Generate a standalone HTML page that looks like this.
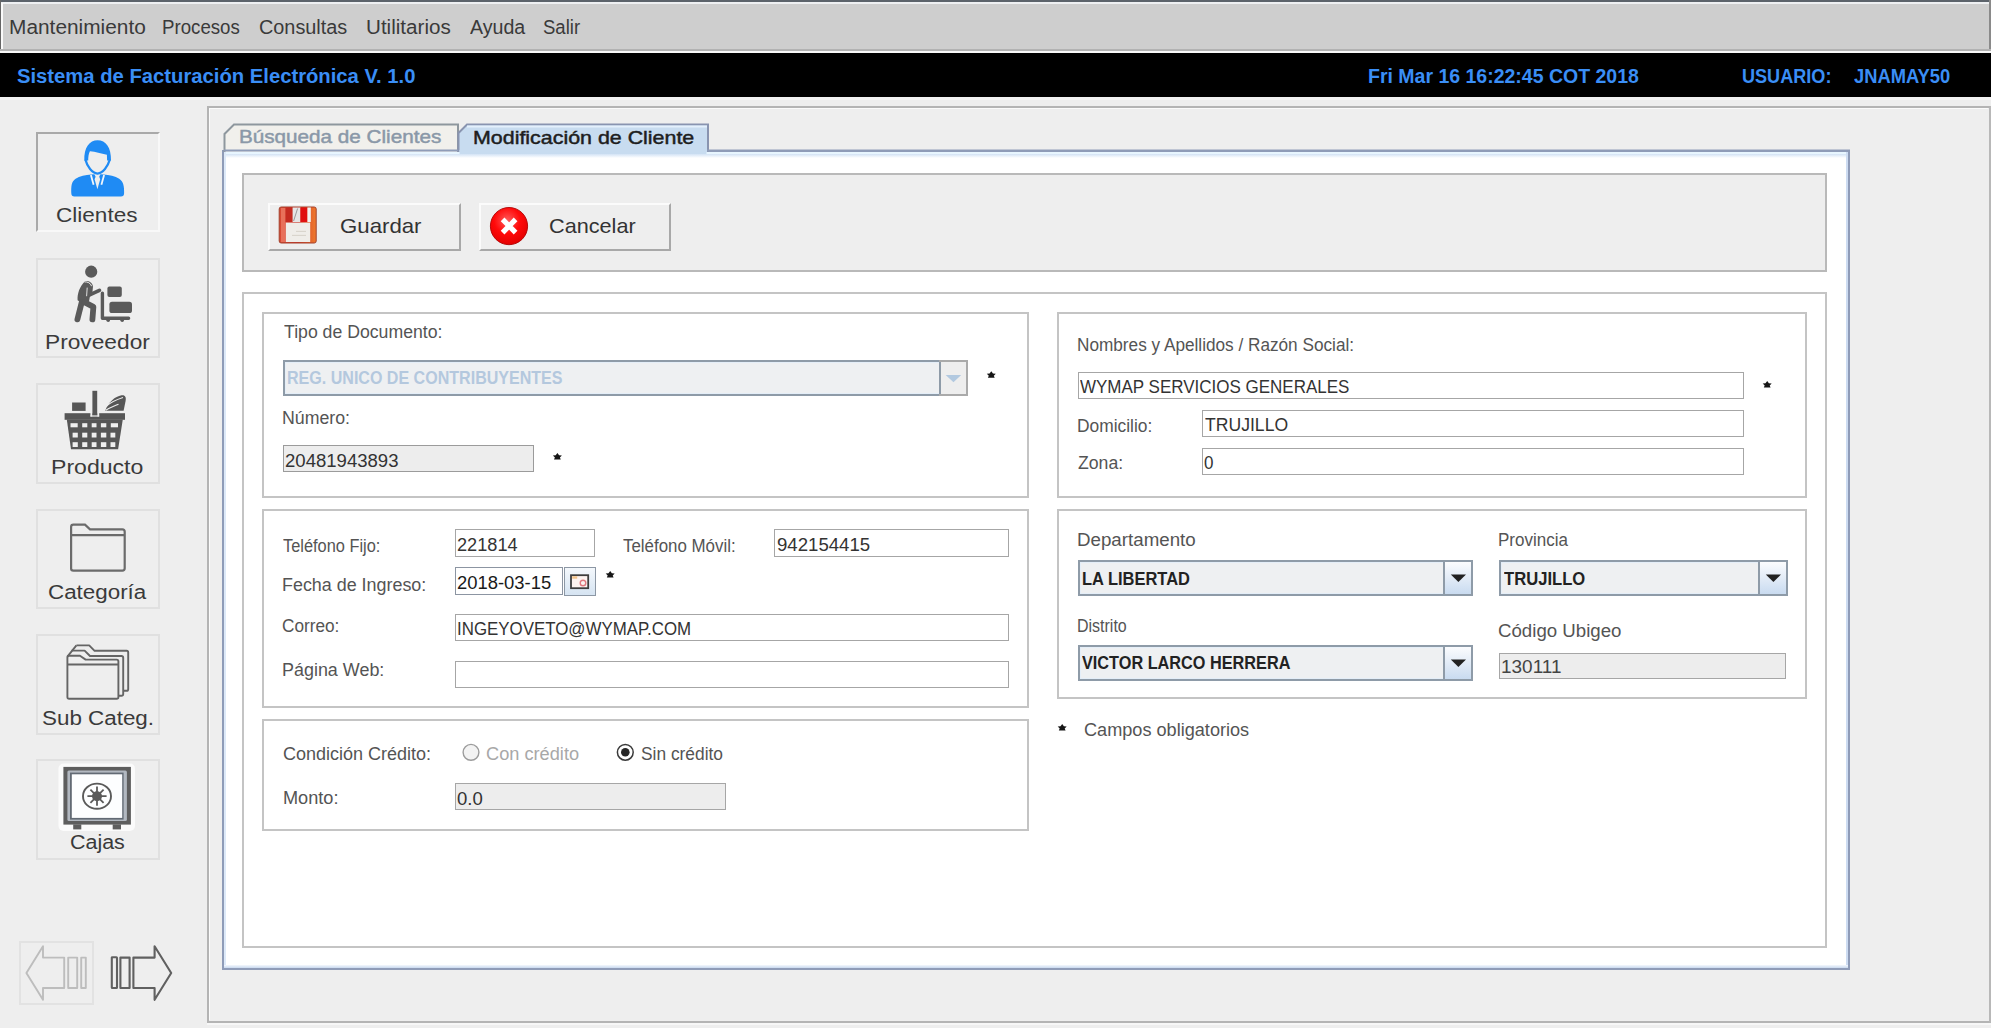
<!DOCTYPE html>
<html><head><meta charset="utf-8">
<style>
*{box-sizing:border-box;margin:0;padding:0}
html,body{width:1991px;height:1028px;overflow:hidden;background:#eeeeee;font-family:"Liberation Sans",sans-serif}
.a{position:absolute}
.tx{position:absolute;white-space:pre;line-height:1;transform-origin:0 0}
.fld{position:absolute;background:#fff;border:1px solid #a6a6a6}
.dis{background:#ededed}
.pan{position:absolute;border:2px solid #c4c4c4;background:#fff}
.cmb{position:absolute;border:2px solid #8e9ba8;background:#eef0f2}
.cmb .in{position:absolute;left:0;top:0;right:0;bottom:0;border:1px solid #e4eef8}
.cbtn{position:absolute;top:-2px;bottom:-2px;border:2px solid #8e9ba8;background:linear-gradient(#fbfcfe,#c9dbf0)}
.sb{position:absolute;left:36px;width:124px;border:2px solid #e0e0e0}
</style></head><body>
<!-- menubar -->
<div class="a" style="left:0;top:0;width:1991px;height:53px;background:#cecece"></div>
<div class="a" style="left:0;top:0;width:1991px;height:2px;background:#5c636b"></div>
<div class="a" style="left:0;top:2px;width:1991px;height:2px;background:#eef0f2"></div>
<div class="a" style="left:0;top:0;width:1px;height:53px;background:#666"></div>
<div class="a" style="left:1px;top:3px;width:2px;height:47px;background:#fafafa"></div>
<div class="a" style="left:1989px;top:0;width:2px;height:53px;background:#8a8a8a"></div>
<div class="a" style="left:0;top:49px;width:1991px;height:2px;background:#b2b2b2"></div>
<div class="a" style="left:0;top:51px;width:1991px;height:2px;background:#f7f7f7"></div>
<!-- title bar -->
<div class="a" style="left:0;top:53px;width:1991px;height:44px;background:#000"></div>
<div class="a" style="left:0;top:97px;width:1991px;height:3px;background:#f3f3f3"></div>

<!-- side buttons -->
<div class="sb" style="top:132px;height:100px;border-color:#a9a9a9 #f8f8f8 #f8f8f8 #a9a9a9"></div>
<div class="sb" style="top:258px;height:100px"></div>
<div class="sb" style="top:383px;height:101px"></div>
<div class="sb" style="top:509px;height:100px"></div>
<div class="sb" style="top:634px;height:101px"></div>
<div class="sb" style="top:759px;height:101px"></div>
<div class="a" style="left:19px;top:941px;width:75px;height:64px;border:2px solid #e2e2e2"></div>

<!-- main outer panel -->
<div class="a" style="left:207px;top:106px;width:1784px;height:917px;border:2px solid #b4b4b4;border-right-color:#b8b8b8"></div>
<div class="a" style="left:209px;top:108px;width:1779px;height:1px;background:#fbfbfb"></div>
<div class="a" style="left:209px;top:109px;width:1px;height:911px;background:#fbfbfb"></div>
<div class="a" style="left:207px;top:1023px;width:1784px;height:2px;background:#f7f7f7"></div>

<!-- content panel -->
<div class="a" style="left:222px;top:150px;width:1628px;height:820px;background:#fff;border:2px solid #8f9cb8"></div>
<div class="a" style="left:224px;top:152px;width:1624px;height:2px;background:#e8f6ff"></div>
<div class="a" style="left:224px;top:154px;width:1624px;height:4px;background:linear-gradient(#d3e3f5,#fff)"></div>
<div class="a" style="left:224px;top:152px;width:2px;height:816px;background:#dde9f8"></div>
<div class="a" style="left:1846px;top:152px;width:2px;height:816px;background:#cddcf2"></div>
<div class="a" style="left:224px;top:965px;width:1624px;height:3px;background:linear-gradient(#f4f8fd,#c9d9ef)"></div>

<!-- tabs -->
<svg class="a" style="left:0;top:0" width="1991" height="160">
  <path d="M224.5,152 V134 L234,124.5 H458 V152" fill="#f1f0ec" stroke="#8e979e" stroke-width="2"/>
  <path d="M458.5,152 V133 L467,124.5 H708 V152" fill="#c8dcf0" stroke="#8994b0" stroke-width="2"/>
  <rect x="467" y="125.5" width="240" height="2" fill="#e4f0fc"/>
  <rect x="224" y="149.5" width="234" height="2" fill="#8f9cb8"/>
  <rect x="707" y="149.5" width="1143" height="2" fill="#8f9cb8"/>
  <rect x="459.5" y="150" width="247" height="4" fill="#c8dcf0"/>
</svg>

<!-- toolbar panel -->
<div class="a" style="left:242px;top:173px;width:1585px;height:99px;background:#eeeeee;border:2px solid #b9b9b9"></div>
<div class="a" style="left:268px;top:203px;width:193px;height:48px;border:2px solid;border-color:#fbfbfb #a8a8a8 #a8a8a8 #fbfbfb;background:#eeeeee"></div>
<div class="a" style="left:479px;top:203px;width:192px;height:48px;border:2px solid;border-color:#fbfbfb #a8a8a8 #a8a8a8 #fbfbfb;background:#eeeeee"></div>

<!-- form panel -->
<div class="pan" style="left:242px;top:292px;width:1585px;height:656px"></div>
<div class="pan" style="left:262px;top:312px;width:767px;height:186px"></div>
<div class="pan" style="left:1057px;top:312px;width:750px;height:186px"></div>
<div class="pan" style="left:262px;top:509px;width:767px;height:199px"></div>
<div class="pan" style="left:1057px;top:509px;width:750px;height:190px"></div>
<div class="pan" style="left:262px;top:719px;width:767px;height:112px"></div>

<!-- fields -->
<div class="cmb" style="left:283px;top:360px;width:685px;height:36px;border-color:#8e9ba8 #aaa #8e9ba8 #8e9ba8"><div class="in"></div>
  <div class="a" style="left:654px;top:-2px;width:2px;height:36px;background:#8e9ba8"></div>
  <div class="a" style="left:656px;top:0;width:25px;height:32px;background:#eeeeee"></div>
  <svg class="a" style="left:660px;top:12px" width="18" height="10"><path d="M0.7,0.9 H16.2 L8.45,8.3 Z" fill="#b2c9e0"/></svg>
</div>
<div class="a" style="left:939px;top:360px;width:29px;height:2px;background:#aaa"></div>
<div class="a" style="left:939px;top:394px;width:29px;height:2px;background:#aaa"></div>

<div class="fld dis" style="left:283px;top:445px;width:251px;height:27px;border-color:#9b9b9b"></div>
<div class="fld" style="left:1078px;top:372px;width:666px;height:27px"></div>
<div class="fld" style="left:1202px;top:410px;width:542px;height:27px"></div>
<div class="fld" style="left:1202px;top:448px;width:542px;height:27px"></div>
<div class="fld" style="left:455px;top:529px;width:140px;height:28px"></div>
<div class="fld" style="left:774px;top:529px;width:235px;height:28px"></div>
<div class="fld" style="left:455px;top:567px;width:108px;height:28px;border-color:#8c95a2"></div>
<div class="a" style="left:564px;top:567px;width:32px;height:29px;border:1px solid #8c97a4;background:linear-gradient(#f4f8fc,#d6e4f2)"></div>
<div class="fld" style="left:455px;top:614px;width:554px;height:27px"></div>
<div class="fld" style="left:455px;top:661px;width:554px;height:27px"></div>
<div class="fld dis" style="left:1499px;top:653px;width:287px;height:26px"></div>
<div class="fld dis" style="left:455px;top:783px;width:271px;height:27px"></div>

<!-- combos right -->
<div class="cmb" style="left:1078px;top:560px;width:395px;height:36px"><div class="in"></div>
  <div class="cbtn" style="left:363px;width:30px"></div>
  <svg class="a" style="left:370px;top:12px" width="18" height="10"><path d="M0.8,0.6 H16 L8.4,8 Z" fill="#222"/></svg>
</div>
<div class="cmb" style="left:1499px;top:560px;width:289px;height:36px"><div class="in"></div>
  <div class="cbtn" style="left:257px;width:30px"></div>
  <svg class="a" style="left:264px;top:12px" width="18" height="10"><path d="M0.8,0.6 H16 L8.4,8 Z" fill="#222"/></svg>
</div>
<div class="cmb" style="left:1078px;top:645px;width:395px;height:36px"><div class="in"></div>
  <div class="cbtn" style="left:363px;width:30px"></div>
  <svg class="a" style="left:370px;top:12px" width="18" height="10"><path d="M0.8,0.6 H16 L8.4,8 Z" fill="#222"/></svg>
</div>

<svg class="a" style="left:0;top:0" width="1991" height="1028" viewBox="0 0 1991 1028">
<!-- Clientes icon -->
<g fill="#1f8bf4">
  <path d="M84.3,160.6 C83.9,147.5 89.5,140.3 97.6,140.3 C105.8,140.3 111.3,147.5 111,160.6 L107.1,160.6 L106.9,154.8 C101,153.8 95,151.2 89.9,151.3 C88.6,153.6 88.2,157 88.2,160.6 Z"/>
  <path d="M71.3,193.2 C71.1,186.5 71.3,181.6 75.6,178.8 C79.6,176.2 85.6,175 91.2,174.6 L94.4,174.3 L95.6,176.8 L94.6,179.2 L97.4,189.2 L100.2,179.2 L99.2,176.8 L100.4,174.3 L103.6,174.6 C109.2,175 115.2,176.2 119.2,178.8 C123.5,181.6 124.3,186.5 124.1,193.2 Q124,196.4 121,196.4 H74.4 Q71.4,196.4 71.3,193.2 Z"/>
</g>
<path d="M85.4,159.6 C87.2,166.4 92,173.2 97.5,173.6 C103,173.2 107.8,166.4 109.8,159.6" fill="none" stroke="#1f8bf4" stroke-width="2.2"/>
<g stroke="#f2f6fb" stroke-width="1.8" fill="none"><path d="M90.9,175 L93.6,184.8"/><path d="M104.1,175 L101.4,184.8"/></g>
<!-- Proveedor icon -->
<g fill="#5a5a5a" stroke="#5a5a5a" stroke-linecap="round" stroke-linejoin="round">
  <circle cx="91.2" cy="271.7" r="6.1" stroke="none"/>
  <path d="M85.2,281 C89,280.6 92.6,282.6 93,286.4 L92.4,292.4 L89.8,297 L89,301.6 L82.4,303.6 L77.6,300.2 C77.2,294 79.4,286.6 85.2,281 Z" stroke="none"/>
  <path d="M89.6,286.4 L88.6,295.4 L99.4,290.4" stroke-width="3.8" fill="none"/>
  <path d="M81.8,302 L77.4,319.4" stroke-width="5.8" fill="none"/>
  <path d="M84.8,302.4 L93.4,306.8 L92.4,319.4" stroke-width="5.8" fill="none"/>
  <path d="M102.4,293.2 L102.4,318.2 L128.6,318.2" stroke-width="3.4" fill="none"/>
  <circle cx="108.2" cy="320.2" r="1.8" stroke="none"/><circle cx="122.2" cy="320.2" r="1.8" stroke="none"/>
  <rect x="107.4" y="286.4" width="14.4" height="10.6" rx="2" stroke="none"/>
  <rect x="109.4" y="301.8" width="22.6" height="11.2" rx="2.6" stroke="none"/>
</g>
<path d="M84.4,281.9 C87.6,281.6 90.6,283 91.6,286.2" fill="none" stroke="#eeeeee" stroke-width="1"/>
<path d="M87.2,287.6 L86.6,296.2" fill="none" stroke="#eeeeee" stroke-width="0.9"/>
<!-- Producto basket -->
<g fill="#565656">
  <rect x="64.6" y="413.2" width="60.4" height="6.6"/>
  <path d="M66.8,419.6 H122.8 L118.1,449.2 H71 Z"/>
  <rect x="72.1" y="402.5" width="13.5" height="8.4"/>
  <path d="M105.2,410.8 C108.5,402 115,396.5 121.5,395.3 C125.5,394.8 126.2,397.5 125.6,401 L123.6,410.8 Z"/>
  <rect x="92.4" y="390.8" width="4.8" height="24.6"/>
</g>
<g fill="#eeeeee">
  <rect x="90.4" y="413" width="1.8" height="3.5"/><rect x="97.4" y="413" width="1.8" height="3.5"/>
  <rect x="90.4" y="415.4" width="8.8" height="1.2"/>
  <rect x="70.5" y="423.2" width="7.2" height="4.1"/><rect x="82.2" y="423.2" width="5.1" height="4.1"/><rect x="91.7" y="423.2" width="4.8" height="4.1"/><rect x="100.9" y="423.2" width="5.4" height="4.1"/><rect x="110.8" y="423.2" width="7.2" height="4.1"/>
  <rect x="72.6" y="432.7" width="5.2" height="4.8"/><rect x="82.2" y="432.7" width="5.1" height="4.8"/><rect x="91.7" y="432.7" width="4.8" height="4.8"/><rect x="100.9" y="432.7" width="5.4" height="4.8"/><rect x="110.5" y="432.7" width="4.8" height="4.8"/>
  <rect x="72.6" y="442.2" width="5.2" height="4.8"/><rect x="82.2" y="442.2" width="5.1" height="4.8"/><rect x="91.7" y="442.2" width="4.8" height="4.8"/><rect x="100.9" y="442.2" width="5.4" height="4.8"/><rect x="110.5" y="442.2" width="4.8" height="4.8"/>
</g>
<g stroke="#eeeeee" stroke-width="1.1" fill="none"><path d="M106.5,406 C111,402 116,399.8 123,397.5"/><path d="M105.8,410.3 C110,407.6 114,406.2 118.5,404.2"/></g>
<!-- Categoria folder -->
<path d="M71.1,568.4 V527 Q71.1,524.7 73.4,524.7 H85 L90,529.3 H122.3 Q124.7,529.3 124.7,531.7 V568.3 Q124.7,570.6 122.3,570.6 H73.4 Q71.1,570.6 71.1,568.4 Z M71.1,535.2 H124.7" fill="none" stroke="#6b6b6b" stroke-width="2.2"/>
<!-- Sub categ -->
<g fill="none" stroke="#656565" stroke-width="1.9" stroke-linejoin="round">
  <path d="M76.4,645.4 H89.2 L94.6,650.8 H126.6 Q128.2,650.8 128.2,652.6 V689.2 Q128.2,690.8 126.6,690.8 H123.6"/>
  <path d="M71.6,650.6 H84.6 L90,656 H121.4 Q123.2,656 123.2,657.8 V694 Q123.2,695.8 121.4,695.8 H118.8"/>
  <path d="M67.4,697 V657.4 Q67.4,655.8 69,655.8 H80 L85.6,659.6 H116.6 Q118.4,659.6 118.4,661.4 V697 Q118.4,698.8 116.6,698.8 H69.2 Q67.4,698.8 67.4,697 Z M67.4,664.5 H118.4"/>
  <path d="M67.4,656.6 L76.4,645.4"/>
</g>
<!-- Cajas safe -->
<rect x="58.5" y="763.5" width="76.5" height="67.5" rx="5" fill="#fbfbfb"/>
<rect x="63.4" y="766.9" width="67.5" height="57.7" fill="#5e5e5e"/>
<rect x="67.4" y="770.6" width="59.5" height="50.4" rx="1.5" fill="#b2b8c0"/>
<rect x="70" y="772.6" width="53.6" height="47" fill="#626a74"/>
<rect x="71.8" y="774.3" width="50.4" height="43.6" fill="#fdfeff"/>
<ellipse cx="97" cy="796.2" rx="14" ry="12.6" fill="none" stroke="#5a5a5a" stroke-width="1.9"/>
<circle cx="97" cy="796.2" r="5" fill="#5a5a5a"/>
<g stroke="#5a5a5a" stroke-width="1.8"><path d="M97,786.6 V805.8 M87.4,796.2 H106.6 M90.4,789.6 L103.6,802.8 M103.6,789.6 L90.4,802.8"/></g>
<rect x="73.2" y="824.4" width="8.1" height="5" fill="#5e5e5e"/>
<rect x="112.7" y="824.4" width="8.3" height="5" fill="#5e5e5e"/>
<!-- arrows -->
<path d="M43,946.2 L26.4,973 L43,999.8 V988 H64.2 V957.6 H43 Z M68.2,957.6 H77.2 V988 H68.2 Z M81.2,957.6 H85.8 V988 H81.2 Z" fill="none" stroke="#bdbdbd" stroke-width="1.9" stroke-linejoin="round"/>
<path d="M154.6,946.2 L171.2,973 L154.6,999.8 V988 H133.4 V957.6 H154.6 Z M111.8,957.6 Q111.8,957.2 112.4,957.2 H116.4 Q117,957.2 117,958 V987.4 Q117,988 116.4,988 H112.4 Q111.8,988 111.8,987.4 Z M120.4,957.6 H129.6 V988 H120.4 Z" fill="none" stroke="#606060" stroke-width="2.1" stroke-linejoin="round"/>
<!-- floppy -->
<defs>
  <linearGradient id="fg" x1="0" x2="1" y1="0" y2="0"><stop offset="0" stop-color="#d94a34"/><stop offset="0.5" stop-color="#c8342a"/><stop offset="1" stop-color="#f07a2c"/></linearGradient>
  <radialGradient id="rg" cx="0.45" cy="0.35" r="0.7"><stop offset="0" stop-color="#ff5a5a"/><stop offset="0.5" stop-color="#ff0a0a"/><stop offset="1" stop-color="#e00000"/></radialGradient>
  <linearGradient id="calg" x1="0" x2="0" y1="0" y2="1"><stop offset="0" stop-color="#f6f9fc"/><stop offset="1" stop-color="#c8dbef"/></linearGradient>
</defs>
<rect x="279.2" y="207" width="37" height="36" rx="2" fill="url(#fg)" stroke="#a3402c" stroke-width="1"/>
<rect x="281" y="208" width="4.5" height="34" fill="#e8705a"/>
<rect x="285.6" y="207.5" width="7" height="14.5" fill="#c52a20"/>
<rect x="292.6" y="207.5" width="8" height="14.5" fill="#e6e6e6"/>
<path d="M293.6,221 L297.6,208.5" stroke="#9a9a9a" stroke-width="1"/>
<rect x="300.4" y="207.5" width="7" height="14.5" fill="#e01010"/>
<rect x="307.4" y="207.5" width="3.4" height="14.5" fill="#f2f2f2"/>
<rect x="285.8" y="222.6" width="24.4" height="19.4" fill="#efede9"/>
<path d="M296,231.4 H306 M292,235.4 H306" stroke="#cfcac2" stroke-width="0.8"/>
<!-- cancel -->
<circle cx="509" cy="226.1" r="18.6" fill="url(#rg)" stroke="#b00000" stroke-width="0.9"/>
<path d="M502.6,219.4 L515.6,232.6 M515.6,219.4 L502.6,232.6" stroke="#fff" stroke-width="5.2" stroke-linecap="butt"/>
<!-- calendar -->
<rect x="571" y="575.2" width="17.2" height="13" fill="#fdf3f0" stroke="#3e3e3e" stroke-width="1.8"/>
<rect x="572.2" y="576.3" width="5" height="2.4" fill="#f2c48a"/>
<circle cx="583" cy="583" r="2.8" fill="none" stroke="#e07a80" stroke-width="1.4"/>
<!-- radios -->
<circle cx="471" cy="752.3" r="7.9" fill="#f3f3f3" stroke="#9c9c9c" stroke-width="1.4"/>
<circle cx="625.3" cy="752.3" r="7.9" fill="#fff" stroke="#3a3a3a" stroke-width="1.5"/>
<circle cx="625.3" cy="752.3" r="4.3" fill="#262626"/>
<!-- asterisks -->
<defs><path id="ast" d="M0,-3.4 L1.7,-1.1 L4.5,-0.9 L2.5,1 L3.4,3.1 H-3.4 L-2.5,1 L-4.5,-0.9 L-1.7,-1.1 Z"/></defs>
<use fill="#161616" href="#ast" x="991.3" y="374.7"/>
<use fill="#161616" href="#ast" x="557.4" y="456.4"/>
<use fill="#161616" href="#ast" x="1767.2" y="384.4"/>
<use fill="#161616" href="#ast" x="610.2" y="574.4"/>
<use fill="#161616" href="#ast" x="1062.2" y="727.4"/>
</svg>

<div class="tx" style="left:8.73px;top:18.40px;font-size:19.5px;font-weight:400;color:#3a3a3a;transform:scaleX(1.0698);">Mantenimiento</div>
<div class="tx" style="left:162.04px;top:18.40px;font-size:19.5px;font-weight:400;color:#3a3a3a;transform:scaleX(0.9575);">Procesos</div>
<div class="tx" style="left:259.18px;top:18.40px;font-size:19.5px;font-weight:400;color:#3a3a3a;transform:scaleX(1.0176);">Consultas</div>
<div class="tx" style="left:365.84px;top:18.40px;font-size:19.5px;font-weight:400;color:#3a3a3a;transform:scaleX(1.0570);">Utilitarios</div>
<div class="tx" style="left:470.30px;top:18.40px;font-size:19.5px;font-weight:400;color:#3a3a3a;transform:scaleX(1.0055);">Ayuda</div>
<div class="tx" style="left:543.45px;top:18.40px;font-size:19.5px;font-weight:400;color:#3a3a3a;transform:scaleX(0.9500);">Salir</div>
<div class="tx" style="left:16.59px;top:66.00px;font-size:20px;font-weight:700;color:#3a8ef6;transform:scaleX(1.0117);">Sistema de Facturación Electrónica V. 1.0</div>
<div class="tx" style="left:1368.43px;top:66.30px;font-size:20px;font-weight:700;color:#3a8ef6;transform:scaleX(0.9746);">Fri Mar 16 16:22:45 COT 2018</div>
<div class="tx" style="left:1741.60px;top:66.30px;font-size:20px;font-weight:700;color:#3a8ef6;transform:scaleX(0.9042);">USUARIO:</div>
<div class="tx" style="left:1853.60px;top:66.30px;font-size:20px;font-weight:700;color:#3a8ef6;transform:scaleX(0.9173);">JNAMAY50</div>
<div class="tx" style="left:56.04px;top:206.00px;font-size:19.5px;font-weight:400;color:#3a3a3a;transform:scaleX(1.1565);">Clientes</div>
<div class="tx" style="left:44.83px;top:332.70px;font-size:19.5px;font-weight:400;color:#3a3a3a;transform:scaleX(1.1652);">Proveedor</div>
<div class="tx" style="left:50.72px;top:457.90px;font-size:19.5px;font-weight:400;color:#3a3a3a;transform:scaleX(1.1831);">Producto</div>
<div class="tx" style="left:47.65px;top:583.00px;font-size:19.5px;font-weight:400;color:#3a3a3a;transform:scaleX(1.1471);">Categoría</div>
<div class="tx" style="left:41.75px;top:709.20px;font-size:19.5px;font-weight:400;color:#3a3a3a;transform:scaleX(1.1484);">Sub Categ.</div>
<div class="tx" style="left:70.30px;top:833.40px;font-size:19.5px;font-weight:400;color:#3a3a3a;transform:scaleX(1.1000);">Cajas</div>
<div class="tx" style="left:239.23px;top:128.80px;font-size:17.7px;font-weight:400;color:#8a98a8;transform:scaleX(1.1686);-webkit-text-stroke:0.45px #8a98a8">Búsqueda de Clientes</div>
<div class="tx" style="left:473.09px;top:130.20px;font-size:17.7px;font-weight:400;color:#1e1e1e;transform:scaleX(1.2099);-webkit-text-stroke:0.45px #1e1e1e">Modificación de Cliente</div>
<div class="tx" style="left:339.74px;top:215.20px;font-size:21px;font-weight:400;color:#333;transform:scaleX(1.0579);">Guardar</div>
<div class="tx" style="left:548.97px;top:215.20px;font-size:21px;font-weight:400;color:#333;transform:scaleX(1.0313);">Cancelar</div>
<div class="tx" style="left:283.50px;top:324.00px;font-size:17.5px;font-weight:400;color:#545454;transform:scaleX(1.0096);">Tipo de Documento:</div>
<div class="tx" style="left:282.39px;top:409.50px;font-size:17.5px;font-weight:400;color:#545454;transform:scaleX(1.0138);">Número:</div>
<div class="tx" style="left:1077.02px;top:336.50px;font-size:17.5px;font-weight:400;color:#545454;transform:scaleX(0.9821);">Nombres y Apellidos / Razón Social:</div>
<div class="tx" style="left:1077.21px;top:418.30px;font-size:17.5px;font-weight:400;color:#545454;transform:scaleX(0.9932);">Domicilio:</div>
<div class="tx" style="left:1078.00px;top:455.00px;font-size:17.5px;font-weight:400;color:#545454;transform:scaleX(1.0091);">Zona:</div>
<div class="tx" style="left:283.40px;top:537.50px;font-size:17.5px;font-weight:400;color:#545454;transform:scaleX(0.9359);">Teléfono Fijo:</div>
<div class="tx" style="left:623.00px;top:537.50px;font-size:17.5px;font-weight:400;color:#545454;transform:scaleX(0.9652);">Teléfono Móvil:</div>
<div class="tx" style="left:282.38px;top:577.00px;font-size:17.5px;font-weight:400;color:#545454;transform:scaleX(1.0230);">Fecha de Ingreso:</div>
<div class="tx" style="left:282.42px;top:618.30px;font-size:17.5px;font-weight:400;color:#545454;transform:scaleX(0.9821);">Correo:</div>
<div class="tx" style="left:282.38px;top:662.00px;font-size:17.5px;font-weight:400;color:#545454;transform:scaleX(1.0245);">Página Web:</div>
<div class="tx" style="left:1076.93px;top:532.00px;font-size:17.5px;font-weight:400;color:#545454;transform:scaleX(1.0706);">Departamento</div>
<div class="tx" style="left:1498.03px;top:532.00px;font-size:17.5px;font-weight:400;color:#545454;transform:scaleX(0.9718);">Provincia</div>
<div class="tx" style="left:1077.09px;top:617.50px;font-size:17.5px;font-weight:400;color:#545454;transform:scaleX(0.9132);">Distrito</div>
<div class="tx" style="left:1497.93px;top:623.00px;font-size:17.5px;font-weight:400;color:#545454;transform:scaleX(1.0667);">Código Ubigeo</div>
<div class="tx" style="left:1084.36px;top:721.50px;font-size:17.5px;font-weight:400;color:#545454;transform:scaleX(1.0354);">Campos obligatorios</div>
<div class="tx" style="left:282.57px;top:745.70px;font-size:17.5px;font-weight:400;color:#545454;transform:scaleX(1.0289);">Condición Crédito:</div>
<div class="tx" style="left:486.46px;top:745.70px;font-size:17.5px;font-weight:400;color:#a8a8a8;transform:scaleX(1.0398);">Con crédito</div>
<div class="tx" style="left:640.71px;top:745.70px;font-size:17.5px;font-weight:400;color:#545454;transform:scaleX(0.9914);">Sin crédito</div>
<div class="tx" style="left:282.56px;top:790.20px;font-size:17.5px;font-weight:400;color:#545454;transform:scaleX(1.0373);">Monto:</div>
<div class="tx" style="left:287.48px;top:370.20px;font-size:17.5px;font-weight:700;color:#b4c8de;transform:scaleX(0.9171);">REG. UNICO DE CONTRIBUYENTES</div>
<div class="tx" style="left:285.17px;top:451.60px;font-size:18px;font-weight:400;color:#333333;transform:scaleX(1.0306);">20481943893</div>
<div class="tx" style="left:1080.40px;top:378.00px;font-size:18px;font-weight:400;color:#333333;transform:scaleX(0.9439);">WYMAP SERVICIOS GENERALES</div>
<div class="tx" style="left:1204.90px;top:416.20px;font-size:18px;font-weight:400;color:#333333;transform:scaleX(0.9774);">TRUJILLO</div>
<div class="tx" style="left:1203.56px;top:454.40px;font-size:18px;font-weight:400;color:#333333;transform:scaleX(0.9444);">0</div>
<div class="tx" style="left:457.39px;top:536.10px;font-size:18px;font-weight:400;color:#333333;transform:scaleX(1.0102);">221814</div>
<div class="tx" style="left:776.77px;top:536.10px;font-size:18px;font-weight:400;color:#333333;transform:scaleX(1.0341);">942154415</div>
<div class="tx" style="left:457.28px;top:573.80px;font-size:18px;font-weight:400;color:#1a1a1a;transform:scaleX(1.0233);">2018-03-15</div>
<div class="tx" style="left:457.26px;top:620.00px;font-size:18px;font-weight:400;color:#333333;transform:scaleX(0.9379);">INGEYOVETO@WYMAP.COM</div>
<div class="tx" style="left:1082.07px;top:570.50px;font-size:17.8px;font-weight:700;color:#222;transform:scaleX(0.9261);">LA LIBERTAD</div>
<div class="tx" style="left:1504.00px;top:570.50px;font-size:17.8px;font-weight:700;color:#222;transform:scaleX(0.9349);">TRUJILLO</div>
<div class="tx" style="left:1082.40px;top:655.30px;font-size:17.8px;font-weight:700;color:#222;transform:scaleX(0.9145);">VICTOR LARCO HERRERA</div>
<div class="tx" style="left:1500.95px;top:658.00px;font-size:18px;font-weight:400;color:#444;transform:scaleX(1.0536);">130111</div>
<div class="tx" style="left:456.87px;top:790.00px;font-size:18px;font-weight:400;color:#333333;transform:scaleX(1.0292);">0.0</div>
</body></html>
